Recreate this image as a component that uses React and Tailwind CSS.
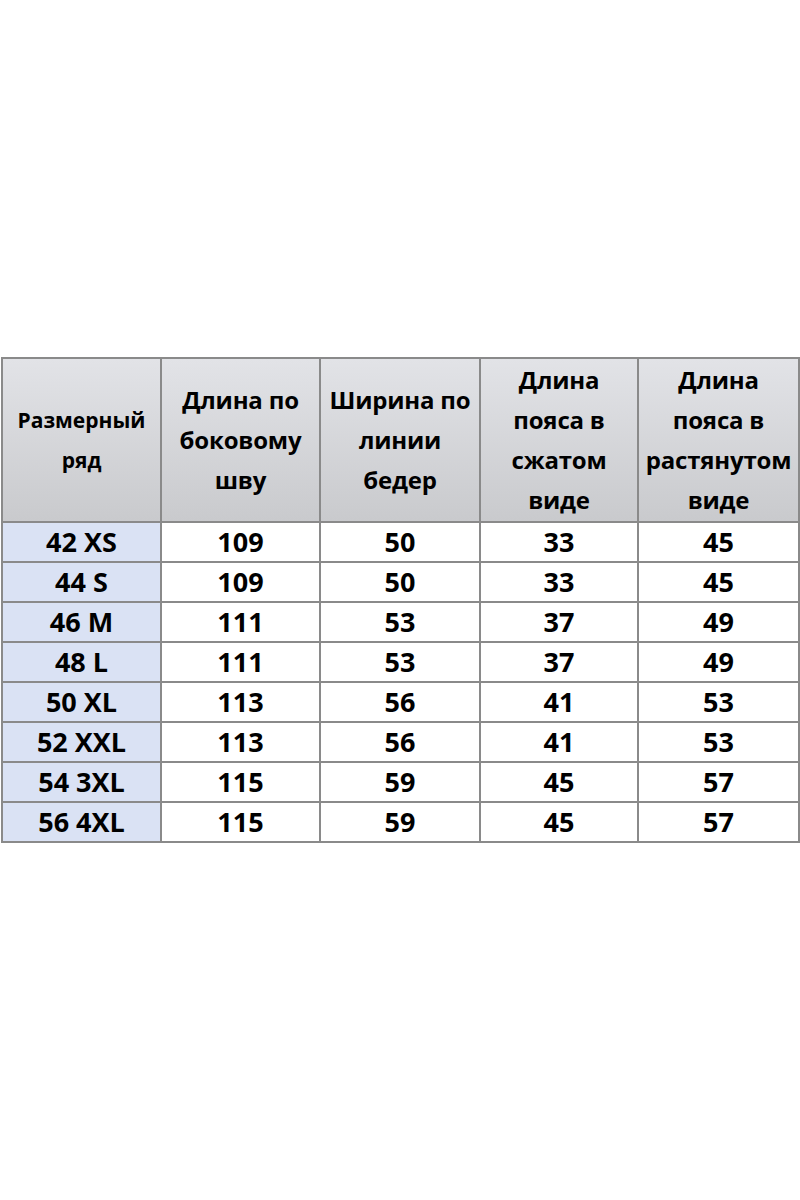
export default function App() {
  const rows = [
    ["42 XS", "109", "50", "33", "45"],
    ["44 S", "109", "50", "33", "45"],
    ["46 M", "111", "53", "37", "49"],
    ["48 L", "111", "53", "37", "49"],
    ["50 XL", "113", "56", "41", "53"],
    ["52 XXL", "113", "56", "41", "53"],
    ["54 3XL", "115", "59", "45", "57"],
    ["56 4XL", "115", "59", "45", "57"],
  ];
  const heads = [
    ["Длина по", "боковому", "шву"],
    ["Ширина по", "линии", "бедер"],
    ["Длина", "пояса в", "сжатом", "виде"],
    ["Длина", "пояса в", "растянутом", "виде"],
  ];
  const hc =
    "border-2 border-[#8a8a8a] bg-gradient-to-b from-[#e2e3e7] to-[#c9cacd] text-center align-middle p-0 whitespace-nowrap";
  return (
    <div
      className="w-[800px] h-[1200px] bg-white pt-[357px] pl-[1px]"
      style={{ fontFamily: "'Open Sans', sans-serif" }}
    >
      <table className="border-collapse table-fixed w-[797px] text-black">
        <colgroup>
          <col className="w-[159px]" />
          <col className="w-[159px]" />
          <col className="w-[160px]" />
          <col className="w-[158px]" />
          <col className="w-[161px]" />
        </colgroup>
        <thead>
          <tr className="h-[164px]">
            <th className={hc + " text-[21px] leading-[40px] font-bold"}>
              <div>Размерный</div>
              <div>ряд</div>
            </th>
            {heads.map((h, i) => (
              <th key={i} className={hc + " text-[24px] leading-[40px] font-bold tracking-[-0.2px]"}>
                {h.map((l, j) => (
                  <div key={j}>{l}</div>
                ))}
              </th>
            ))}
          </tr>
        </thead>
        <tbody>
          {rows.map((r, i) => (
            <tr key={i} className="h-[40px]">
              {r.map((c, j) => (
                <td
                  key={j}
                  className={
                    "border-2 border-[#8a8a8a] text-center align-middle p-0 text-[27px] font-bold leading-[36px] whitespace-nowrap " +
                    (j === 0 ? "bg-[#dae2f4]" : "bg-white")
                  }
                >
                  {c}
                </td>
              ))}
            </tr>
          ))}
        </tbody>
      </table>
    </div>
  );
}
